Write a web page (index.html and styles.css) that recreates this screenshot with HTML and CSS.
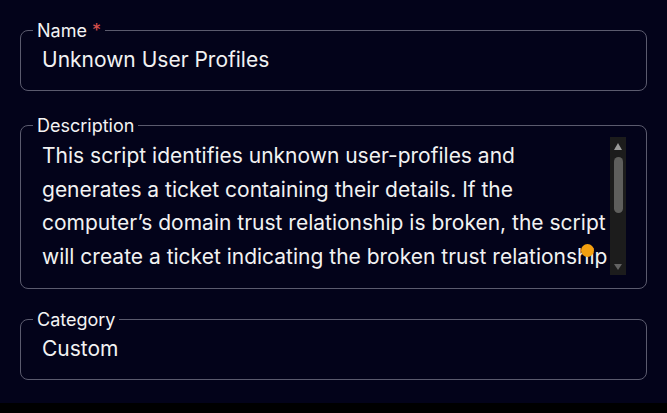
FILE: index.html
```html
<!DOCTYPE html>
<html lang="en">
<head>
<meta charset="utf-8">
<title>Script details</title>
<link rel="stylesheet" href="styles.css">
</head>
<body>
<main class="form">
  <fieldset class="field field-name">
    <legend class="label">Name <span class="req">*</span></legend>
    <input class="control" type="text" value="Unknown User Profiles">
  </fieldset>
  <fieldset class="field field-desc">
    <legend class="label">Description</legend>
    <div class="desc-wrap">
      <textarea class="control area">This script identifies unknown user-profiles and generates a ticket containing their details. If the computer’s domain trust relationship is broken, the script will create a ticket indicating the broken trust relationship and lists the affected user profiles so that a technician can review them. Every profile found is also written to the ticket notes for later auditing and cleanup.</textarea>
      <div class="scrollbar" aria-hidden="true">
        <span class="arrow arrow-up"></span>
        <div class="track"><span class="thumb"></span></div>
        <span class="arrow arrow-down"></span>
      </div>
      <span class="dot"></span>
    </div>
  </fieldset>
  <fieldset class="field field-cat">
    <legend class="label">Category</legend>
    <input class="control" type="text" value="Custom">
  </fieldset>
</main>
</body>
</html>
```
FILE: styles.css
```css
html, body {
  margin: 0;
  padding: 0;
  background: #000;
}
body {
  font-family: Inter, "Noto Sans", sans-serif;
  color: #f2f2f2;
}
.form {
  box-sizing: border-box;
  height: 403px;
  background: #03031a;
  padding: 20px 20px 0 20px;
  display: flex;
  flex-direction: column;
}
.field {
  margin: 0;
  min-width: 0;
  border: 1px solid #5b5b6e;
  border-radius: 8px;
  padding: 6px 20px 18px 20px;
}
.field-desc {
  margin-top: 24px;
  padding-top: 1px;
  padding-bottom: 13px;
}
.field-cat {
  margin-top: 20px;
}
.label {
  font-size: 18px;
  line-height: 21px;
  padding: 0 4px;
  margin-left: -8px;
  color: #f4f4f4;
}
.req {
  color: #d8504c;
}
.control {
  display: block;
  box-sizing: border-box;
  width: 100%;
  margin: 0;
  border: 0;
  outline: none;
  background: transparent;
  color: #f2f2f2;
  font-family: Inter, "Noto Sans", sans-serif;
  font-size: 21px;
  line-height: 25px;
  height: 25px;
  padding: 0 0 0 1px;
}
.desc-wrap {
  position: relative;
  display: flex;
  height: 138px;
}
.area {
  flex: 1;
  min-width: 0;
  width: auto;
  height: 138px;
  font-size: 21px;
  line-height: 33.7px;
  padding: 2px 0 0 1px;
  resize: none;
  overflow: hidden;
}
.scrollbar {
  width: 16px;
  flex: none;
  background: #1c1c1c;
  display: flex;
  flex-direction: column;
  align-items: center;
}
.arrow {
  flex: none;
  width: 0;
  height: 0;
  border-left: 4.5px solid transparent;
  border-right: 4.5px solid transparent;
}
.arrow-up {
  margin-top: 6px;
  border-bottom: 7px solid #9a9a9a;
}
.arrow-down {
  margin-bottom: 5px;
  border-top: 6px solid #626262;
}
.track {
  flex: 1;
  align-self: stretch;
  display: flex;
  justify-content: center;
  padding-top: 7px;
}
.thumb {
  width: 9px;
  height: 56px;
  border-radius: 5px;
  background: #5e5e5c;
}
.dot {
  position: absolute;
  left: 540px;
  top: 107px;
  width: 13px;
  height: 13px;
  border-radius: 50%;
  background: #f4a00f;
}
```
